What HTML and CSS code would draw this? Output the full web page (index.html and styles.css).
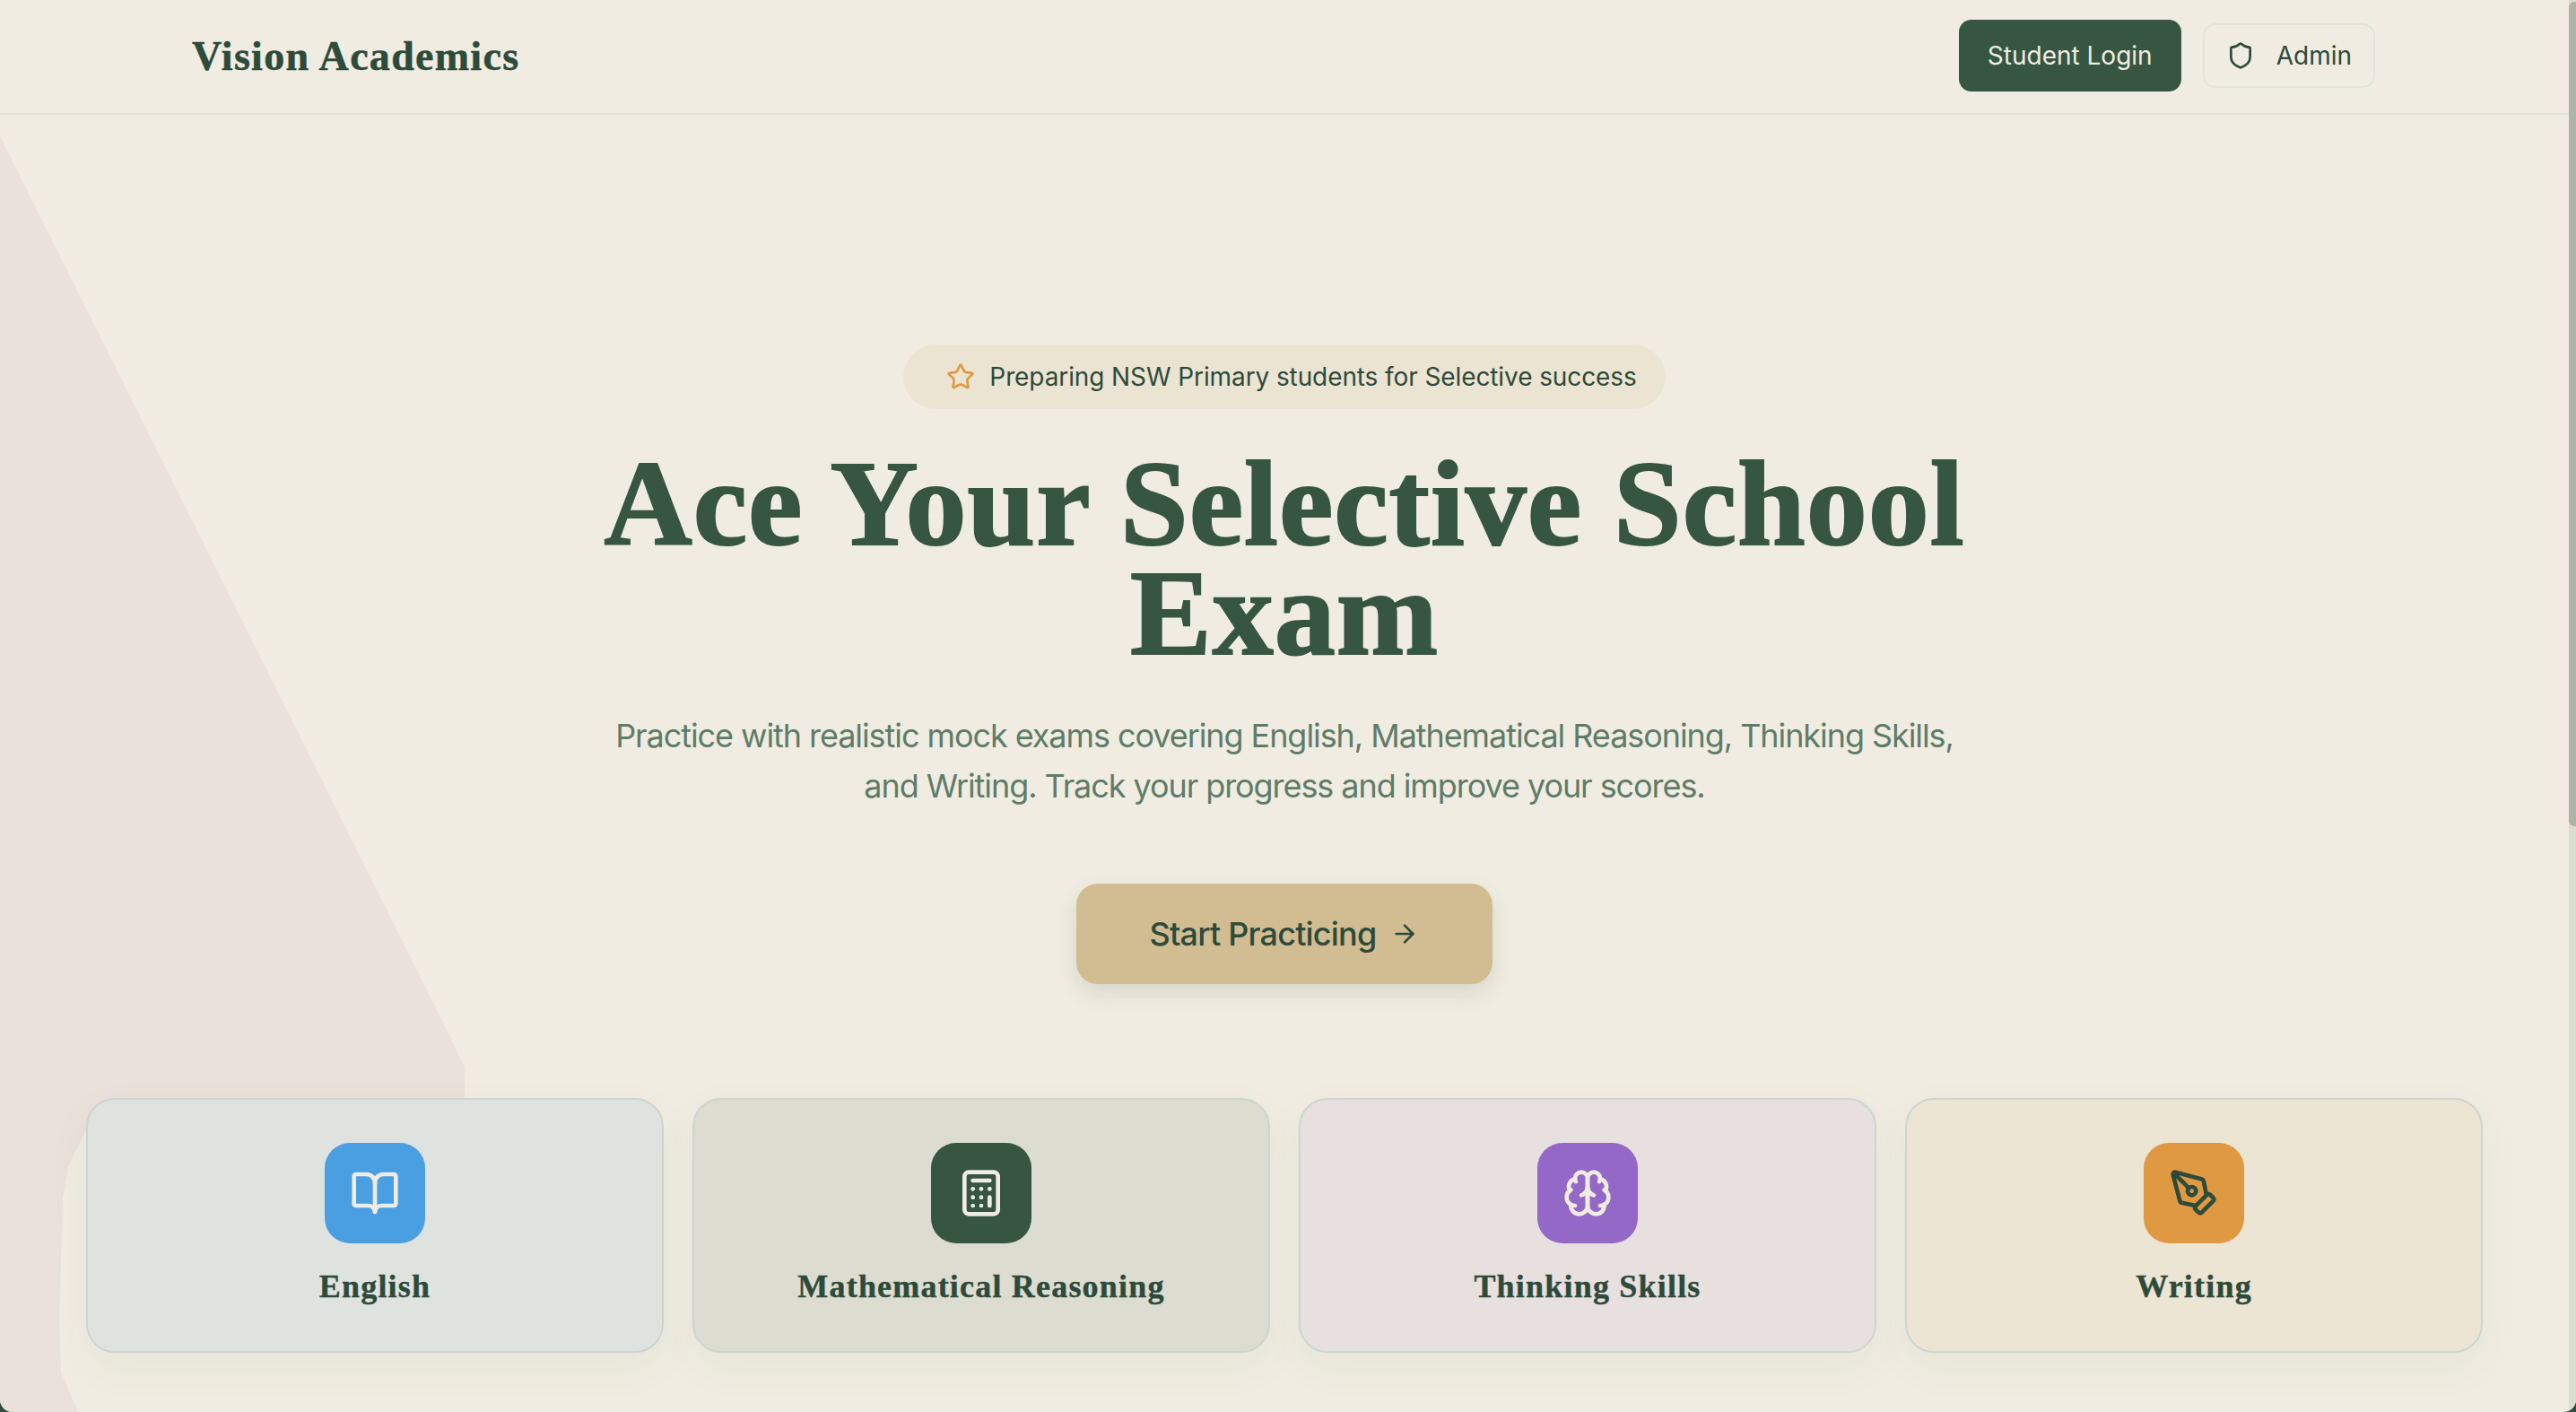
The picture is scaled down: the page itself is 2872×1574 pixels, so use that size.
FILE: index.html
```html
<!DOCTYPE html>
<html lang="en">
<head>
<meta charset="utf-8">
<title>Vision Academics</title>
<link rel="stylesheet" href="styles.css">
</head>
<body>
<div class="app">
  <div class="page">
    <svg class="decor" width="540" height="1574" viewBox="0 0 540 1574" aria-hidden="true"><polygon points="0,152 499,1150 518,1190 518,1225 97,1257 75,1303 70,1337 66,1470 68,1530 87,1574 0,1574"/></svg>
    <header class="topbar">
      <div class="logo">Vision Academics</div>
      <nav class="actions">
        <a class="btn-login">Student Login</a>
        <a class="btn-admin">
          <svg class="ico-32" viewBox="0 0 24 24"><path d="M20 13c0 5-3.5 7.5-7.66 8.95a1 1 0 0 1-.67-.01C7.5 20.5 4 18 4 13V6a1 1 0 0 1 1-1c2 0 4.5-1.2 6.24-2.72a1.17 1.17 0 0 1 1.52 0C14.51 3.81 17 5 19 5a1 1 0 0 1 1 1z"/></svg>
          <span>Admin</span>
        </a>
      </nav>
    </header>
    <main class="hero">
      <div class="pill">
        <svg class="ico-32 star" viewBox="0 0 24 24"><path d="M11.525 2.295a.53.53 0 0 1 .95 0l2.31 4.679a2.123 2.123 0 0 0 1.595 1.16l5.166.756a.53.53 0 0 1 .294.904l-3.736 3.638a2.123 2.123 0 0 0-.611 1.878l.882 5.14a.53.53 0 0 1-.771.56l-4.618-2.428a2.122 2.122 0 0 0-1.973 0L6.396 21.01a.53.53 0 0 1-.77-.56l.881-5.139a2.122 2.122 0 0 0-.611-1.879L2.16 9.795a.53.53 0 0 1 .294-.906l5.165-.755a2.122 2.122 0 0 0 1.597-1.16z"/></svg>
        <span>Preparing NSW Primary students for Selective success</span>
      </div>
      <h1 class="headline">Ace Your Selective School<br>Exam</h1>
      <p class="lead">Practice with realistic mock exams covering English, Mathematical Reasoning, Thinking Skills,<br>and Writing. Track your progress and improve your scores.</p>
      <a class="cta">
        <span>Start Practicing</span>
        <svg class="ico-32" viewBox="0 0 24 24"><path d="M5 12h14"/><path d="m12 5 7 7-7 7"/></svg>
      </a>
    </main>
    <section class="subjects">
      <article class="card card-english">
        <div class="tile tile-blue"><svg class="ico-56" viewBox="0 0 24 24"><path d="M12 7v14"/><path d="M3 18a1 1 0 0 1-1-1V4a1 1 0 0 1 1-1h5a4 4 0 0 1 4 4 4 4 0 0 1 4-4h5a1 1 0 0 1 1 1v13a1 1 0 0 1-1 1h-6a3 3 0 0 0-3 3 3 3 0 0 0-3-3z"/></svg></div>
        <h3 class="card-title">English</h3>
      </article>
      <article class="card card-math">
        <div class="tile tile-green"><svg class="ico-56" viewBox="0 0 24 24"><rect width="16" height="20" x="4" y="2" rx="2"/><line x1="8" x2="16" y1="6" y2="6"/><line x1="16" x2="16" y1="14" y2="18"/><path d="M16 10h.01"/><path d="M12 10h.01"/><path d="M8 10h.01"/><path d="M12 14h.01"/><path d="M8 14h.01"/><path d="M12 18h.01"/><path d="M8 18h.01"/></svg></div>
        <h3 class="card-title">Mathematical Reasoning</h3>
      </article>
      <article class="card card-thinking">
        <div class="tile tile-purple"><svg class="ico-56" viewBox="0 0 24 24"><path d="M12 5a3 3 0 1 0-5.997.125 4 4 0 0 0-2.526 5.77 4 4 0 0 0 .556 6.588A4 4 0 1 0 12 18Z"/><path d="M12 5a3 3 0 1 1 5.997.125 4 4 0 0 1 2.526 5.77 4 4 0 0 1-.556 6.588A4 4 0 1 1 12 18Z"/><path d="M15 13a4.5 4.5 0 0 1-3-4 4.5 4.5 0 0 1-3 4"/><path d="M17.599 6.5a3 3 0 0 0 .399-1.375"/><path d="M6.003 5.125A3 3 0 0 0 6.401 6.5"/><path d="M3.477 10.896a4 4 0 0 1 .585-.396"/><path d="M19.938 10.5a4 4 0 0 1 .585.396"/><path d="M6 18a4 4 0 0 1-1.967-.516"/><path d="M19.967 17.484A4 4 0 0 1 18 18"/></svg></div>
        <h3 class="card-title">Thinking Skills</h3>
      </article>
      <article class="card card-writing">
        <div class="tile tile-orange"><svg class="ico-56 ico-dark" viewBox="0 0 24 24"><path d="M15.707 21.293a1 1 0 0 1-1.414 0l-1.586-1.586a1 1 0 0 1 0-1.414l5.586-5.586a1 1 0 0 1 1.414 0l1.586 1.586a1 1 0 0 1 0 1.414z"/><path d="m18 13-1.375-6.874a1 1 0 0 0-.746-.776L3.235 2.028a1 1 0 0 0-1.207 1.207L5.35 15.879a1 1 0 0 0 .776.746L13 18"/><path d="m2.3 2.3 7.286 7.286"/><circle cx="11" cy="11" r="2"/></svg></div>
        <h3 class="card-title">Writing</h3>
      </article>
    </section>
  </div>
  <div class="scrollbar"><div class="thumb"></div></div>
</div>
</body>
</html>
```

FILE: styles.css
```css
* { box-sizing: border-box; }
html, body { margin: 0; height: 100%; overflow: hidden; }
body { background: #2d4a3a; font-family: Inter, "Noto Sans", sans-serif; color: #2d4a3a; }
.app { display: flex; height: 100vh; background: #f0ece1; border-radius: 0 0 14px 14px; overflow: hidden; }
.page { position: relative; flex: 1; min-width: 0; }
svg { fill: none; stroke: currentColor; stroke-width: 2; stroke-linecap: round; stroke-linejoin: round; flex: none; }
.decor { position: absolute; left: 0; top: 0; stroke: none; }
.decor polygon { fill: #e9e1da; }
.scrollbar { width: 8px; background: #dcddd0; padding-top: 2px; }
.thumb { height: 919px; background: #adb5a8; border-radius: 6px 0 0 6px; }

.ico-32 { width: 32px; height: 32px; }
.ico-56 { width: 56px; height: 56px; color: #f0ece1; }
.ico-dark { color: #2d4a3a; }
.star { color: #e09943; }

.topbar { position: relative; height: 128px; border-bottom: 2px solid #e2e1d7; display: flex; align-items: center; justify-content: space-between; padding: 0 216px 2px 214px; }
.logo { font-family: "Liberation Serif", serif; font-weight: 700; font-size: 46px; letter-spacing: 1.3px; color: #2d4a3a; -webkit-text-stroke: .5px #2d4a3a; }
.actions { display: flex; align-items: center; gap: 24px; }
.btn-login { background: #365641; color: #f0ece1; font-size: 28px; font-weight: 400; height: 80px; padding: 0 32px; border-radius: 14px; display: flex; align-items: center; }
.btn-admin { height: 72px; border: 2px solid #e1e4de; border-radius: 14px; padding: 0 24px; display: flex; align-items: center; gap: 24px; font-size: 28px; font-weight: 400; }

.hero { position: relative; display: flex; flex-direction: column; align-items: center; padding-top: 256px; }
.pill { height: 72px; display: flex; align-items: center; gap: 16px; padding: 0 32px 0 48px; border-radius: 36px; background: #ece4d3; font-size: 28px; font-weight: 400; letter-spacing: -.1px; }
.headline { margin: 44px 0 0; font-family: "Liberation Serif", serif; font-size: 136px; line-height: 122px; font-weight: 700; text-align: center; color: #365641; letter-spacing: 1px; -webkit-text-stroke: 2px #365641; }
.lead { margin: 48px 0 0; font-size: 36px; line-height: 56px; color: #5f7c69; text-align: center; letter-spacing: -1.07px; }
.cta { margin-top: 81px; width: 464px; height: 112px; background: #d2bc92; border-radius: 24px; display: flex; align-items: center; justify-content: center; gap: 16px; font-size: 36px; font-weight: 500; letter-spacing: -.8px; box-shadow: 0 10px 24px rgba(45,74,58,.12); }

.subjects { position: absolute; left: 96px; right: 96px; top: 1224px; display: grid; grid-template-columns: repeat(4, 1fr); gap: 32px; }
.card { height: 284px; border: 2px solid #cdd5d0; border-radius: 32px; padding-top: 48px; display: flex; flex-direction: column; align-items: center; box-shadow: 0 16px 48px rgba(45,74,58,.05); }
.card-english { background: #dee3df; }
.card-math { background: #dcdcd0; }
.card-thinking { background: #e7e0df; }
.card-writing { background: #ece5d3; }
.tile { width: 112px; height: 112px; border-radius: 28px; display: flex; align-items: center; justify-content: center; }
.tile-blue { background: #4a9fe3; }
.tile-green { background: #365641; }
.tile-purple { background: #9468c6; }
.tile-orange { background: #e09943; }
.card-title { margin: 24px 0 0; font-family: "Liberation Serif", serif; font-size: 36px; line-height: 48px; font-weight: 700; color: #2d4a3a; letter-spacing: 1.2px; -webkit-text-stroke: .4px #2d4a3a; }
```
